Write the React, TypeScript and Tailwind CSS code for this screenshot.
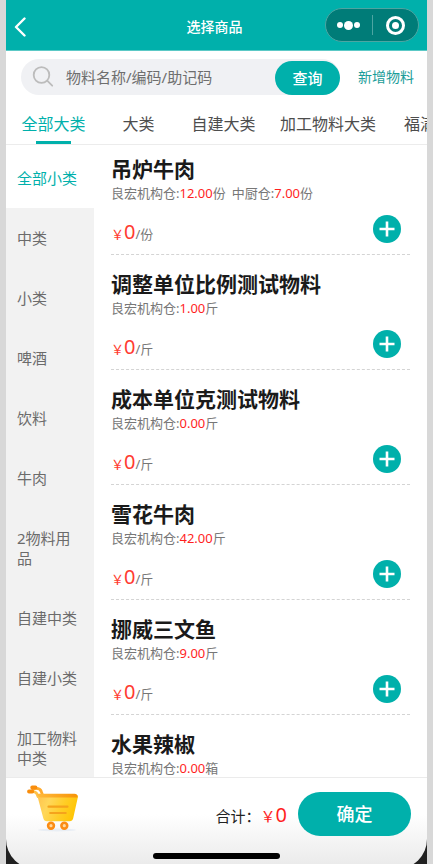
import React, { useState } from "react";

type Stock = { store: string; amount: string; unit: string };
type Product = { name: string; unit: string; stock: Stock[] };

const tabs = [
  { name: "全部大类", size: "w-[85px]" },
  { name: "大类", size: "w-[85px]" },
  { name: "自建大类", size: "w-[85px]" },
  { name: "加工物料大类", size: "px-[14px]" },
  { name: "福满大类", size: "px-[14px]" },
];

const categories = [
  "全部小类",
  "中类",
  "小类",
  "啤酒",
  "饮料",
  "牛肉",
  "2物料用品",
  "自建中类",
  "自建小类",
  "加工物料中类",
];

const products: Product[] = [
  {
    name: "吊炉牛肉",
    unit: "份",
    stock: [
      { store: "良宏机构仓", amount: "12.00", unit: "份" },
      { store: "中厨仓", amount: "7.00", unit: "份" },
    ],
  },
  { name: "调整单位比例测试物料", unit: "斤", stock: [{ store: "良宏机构仓", amount: "1.00", unit: "斤" }] },
  { name: "成本单位克测试物料", unit: "斤", stock: [{ store: "良宏机构仓", amount: "0.00", unit: "斤" }] },
  { name: "雪花牛肉", unit: "斤", stock: [{ store: "良宏机构仓", amount: "42.00", unit: "斤" }] },
  { name: "挪威三文鱼", unit: "斤", stock: [{ store: "良宏机构仓", amount: "9.00", unit: "斤" }] },
  { name: "水果辣椒", unit: "箱", stock: [{ store: "良宏机构仓", amount: "0.00", unit: "箱" }] },
];

function Header() {
  return (
    <header className="grid h-[51px] shrink-0 grid-cols-[1fr_auto_1fr] items-center border-b border-[#5cc9c6] bg-[#00b0ab] px-2">
      <button type="button" aria-label="返回" className="w-6 text-white">
        <svg width="12" height="20" viewBox="0 0 12 20" fill="none" stroke="currentColor" strokeWidth="2.400" strokeLinecap="round" strokeLinejoin="round" className="mt-1">
          <path d="M10.500 1.500 2 10l8.500 8.500" />
        </svg>
      </button>
      <h1 className="pt-1 pr-1 text-sm font-medium text-white">选择商品</h1>
      <div className="flex h-[34px] w-[94px] items-center justify-self-end rounded-full border border-[#4da5a2] bg-[#007c78]">
        <button type="button" aria-label="更多" className="flex h-full flex-1 items-center justify-center gap-px">
          <span className="size-[6px] rounded-full bg-white" />
          <span className="size-[9px] rounded-full bg-white" />
          <span className="size-[6px] rounded-full bg-white" />
        </button>
        <span className="h-5 w-px bg-[#4da5a2]" />
        <button type="button" aria-label="关闭" className="flex h-full flex-1 items-center justify-center">
          <span className="flex size-[19px] items-center justify-center rounded-full border-3 border-white">
            <span className="size-[7px] rounded-full bg-white" />
          </span>
        </button>
      </div>
    </header>
  );
}

function SearchRow() {
  return (
    <form className="flex shrink-0 items-center gap-[18px] pt-2 pr-[13px] pl-[15px]" onSubmit={(e) => e.preventDefault()}>
      <div className="flex h-9 min-w-0 flex-1 items-end rounded-full bg-[#f0f1f4]">
        <label htmlFor="keyword" aria-label="搜索物料" className="flex h-full w-[45px] shrink-0 items-center pl-[11px]">
          <svg width="22" height="22" viewBox="0 0 22 22" fill="none" stroke="#bcbcbc" strokeWidth="1.800" strokeLinecap="round">
            <circle cx="9.500" cy="9" r="7.800" />
            <path d="m15.200 14.700 5 5" />
          </svg>
        </label>
        <input
          id="keyword"
          type="text"
          placeholder="物料名称/编码/助记码"
          className="h-full min-w-0 flex-1 bg-transparent text-[15px] text-[#333] outline-none placeholder:text-[#6e6e6e]"
        />
        <button type="submit" className="h-[34px] w-[65px] shrink-0 rounded-full bg-[#00b0ab] text-[15px] font-medium text-white">
          查询
        </button>
      </div>
      <a href="#new" className="shrink-0 text-sm text-[#1a9d99]">
        新增物料
      </a>
    </form>
  );
}

function TabBar() {
  const [active, setActive] = useState(0);
  return (
    <nav className="flex h-[50px] shrink-0 overflow-x-auto border-b border-[#ececec] pl-[5px] [scrollbar-width:none]">
      {tabs.map((tab, i) => (
        <button
          key={tab.name}
          type="button"
          onClick={() => setActive(i)}
          className={`flex shrink-0 flex-col items-center justify-end gap-[5px] text-base leading-6 whitespace-nowrap ${tab.size} ${i === active ? "text-[#00b0ab]" : "text-[#4d4d4d]"}`}
        >
          {tab.name}
          <span className={`h-[3px] w-[35px] ${i === active ? "bg-[#00b0ab]" : "bg-transparent"}`} />
        </button>
      ))}
    </nav>
  );
}

function Sidebar() {
  const [active, setActive] = useState(0);
  return (
    <aside className="w-[88px] shrink-0 overflow-y-auto border-t-3 border-white bg-[#f2f2f2] [scrollbar-width:none]">
      {categories.map((name, i) => (
        <button
          key={name}
          type="button"
          onClick={() => setActive(i)}
          className={`block w-full py-5 pr-4 pl-[11px] text-left text-[15px] leading-5 ${i === active ? "bg-white text-[#00b0ab]" : "text-[#6b6b6b]"}`}
        >
          {name}
        </button>
      ))}
    </aside>
  );
}

function ProductRow({ product }: { product: Product }) {
  return (
    <li className="border-b border-dashed border-[#d4d4d4] pt-[15px] pb-[11px] first:pt-[10px]">
      <h2 className="text-[21px] leading-7 font-bold text-[#1a1a1a]">{product.name}</h2>
      <p className="flex gap-[6px] text-[13px] leading-5 text-[#777]">
        {product.stock.map((s) => (
          <span key={s.store}>
            {s.store}:<span className="text-[#ff1f1f]">{s.amount}</span>
            {s.unit}
          </span>
        ))}
      </p>
      <div className="mt-3 flex h-7 items-center justify-between pr-[9px]">
        <p className="pt-2 text-[13px] leading-7 text-[#777]">
          <span className="text-[#ff3b30]">
            ￥<span className="text-xl leading-7">0</span>
          </span>
          /{product.unit}
        </p>
        <button type="button" aria-label={`添加${product.name}`} className="flex size-7 items-center justify-center rounded-full bg-[#00b0ab]">
          <svg width="16" height="16" viewBox="0 0 16 16" stroke="white" strokeWidth="2.600">
            <path d="M8 .5v15M.5 8h15" />
          </svg>
        </button>
      </div>
    </li>
  );
}

function CartIcon() {
  return (
    <svg width="54" height="50" viewBox="0 0 54 50" fill="none">
      <defs>
        <linearGradient id="cart-body" x1="10" y1="14" x2="50" y2="30" gradientUnits="userSpaceOnUse">
          <stop stopColor="#ffc24d" />
          <stop offset="0.3" stopColor="#ffd75a" />
          <stop offset="0.65" stopColor="#ffcd26" />
          <stop offset="1" stopColor="#ffc400" />
        </linearGradient>
        <linearGradient id="cart-rim" x1="12" y1="0" x2="52" y2="0" gradientUnits="userSpaceOnUse">
          <stop stopColor="#ffb93a" />
          <stop offset="1" stopColor="#f79408" />
        </linearGradient>
      </defs>
      <ellipse cx="31" cy="45" rx="19" ry="1.500" fill="#e9eef4" />
      <path d="M8 3.500c4.500-.6 6.500.4 7.300 3l1.200 3.500" stroke="#ffab2e" strokeWidth="2.800" strokeLinecap="round" />
      <path d="M3.500 6.500c4.500-.6 6.500.2 7.500 2.500l1 2.500" stroke="#ffc24a" strokeWidth="2.800" strokeLinecap="round" />
      <path d="M6.200 2.500h3.300M3 6.500h3.300" stroke="#f98d0c" strokeWidth="3.800" strokeLinecap="round" />
      <path d="M11 9.500h38.500c1.800 0 2.700 1.300 2.300 3l-4.600 20.800c-.5 2-1.600 2.900-3.600 2.900H21c-2 0-3.200-1-3.700-2.900z" fill="url(#cart-body)" />
      <path d="M13 8.800h35.500c2 0 3.400 1.400 3.100 3.700H15c-2 0-3.200-1.200-4-3.200z" fill="url(#cart-rim)" />
      <path d="M22.500 21.700h19M24.200 28h15.500" stroke="#f5a31c" strokeWidth="2.200" strokeLinecap="round" />
      <circle cx="25" cy="40.700" r="2.900" fill="#ffd9a0" stroke="#fb8c14" strokeWidth="2.600" />
      <circle cx="38.300" cy="40.700" r="2.900" fill="#ffd9a0" stroke="#fb8c14" strokeWidth="2.600" />
    </svg>
  );
}

function Footer() {
  return (
    <footer className="shrink-0 overflow-hidden bg-[#202020]">
      <div className="-mb-[5px] rounded-b-[30px] border-t border-[#ebebeb] bg-linear-to-b from-white from-40% to-[#e9e9e9] pb-[10px]">
        <div className="flex h-[71px] items-center pr-4 pl-5">
          <div className="mb-2">
            <CartIcon />
          </div>
          <p className="mr-[11px] ml-auto pt-1 text-[15px] leading-7 text-[#222]">
            合计：
            <span className="text-[#ff1f1f]">
              ￥<span className="text-xl leading-7">0</span>
            </span>
          </p>
          <button type="button" className="h-11 w-[113px] rounded-full bg-[#00b0ab] text-lg font-medium text-white">
            确定
          </button>
        </div>
        <div className="mx-auto mt-1 h-[6px] w-[127px] rounded-full bg-black" />
      </div>
    </footer>
  );
}

export default function App() {
  return (
    <div className="h-screen bg-[#d8d8d8] px-[6px] font-['Noto_Sans','Noto_Sans_CJK_SC',sans-serif]" lang="zh-CN">
      <div className="flex h-full flex-col overflow-hidden bg-white">
        <Header />
        <SearchRow />
        <TabBar />
        <main className="flex min-h-0 flex-1 overflow-hidden">
          <Sidebar />
          <ul className="min-w-0 flex-1 overflow-y-auto px-[17px] [scrollbar-width:none]">
            {products.map((p) => (
              <ProductRow key={p.name} product={p} />
            ))}
          </ul>
        </main>
        <Footer />
      </div>
    </div>
  );
}
